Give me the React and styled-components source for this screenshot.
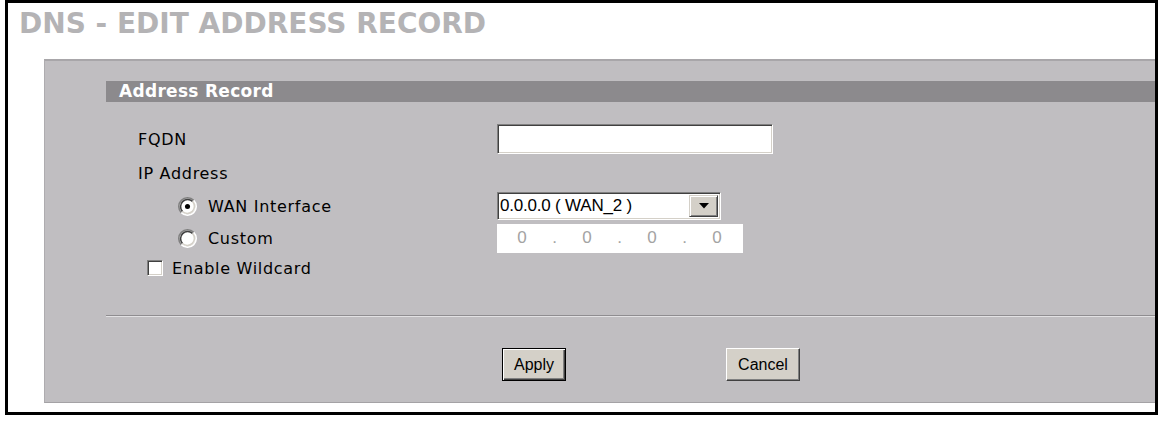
import styled, { createGlobalStyle } from "styled-components";

const GlobalStyle = createGlobalStyle`
  html, body {
    margin: 0;
    padding: 0;
    background: #ffffff;
  }
`;

const Frame = styled.div`
  box-sizing: border-box;
  margin-left: 5px;
  width: 1153px;
  height: 415px;
  border: 3px solid #000000;
  background: #ffffff;
  overflow: hidden;
`;

const Title = styled.h1`
  box-sizing: border-box;
  margin: 0;
  height: 37px;
  padding: 5px 0 0 11px;
  font-family: "DejaVu Sans", Verdana, sans-serif;
  font-weight: bold;
  font-size: 28px;
  line-height: 32px;
  color: #b4b3b5;
  white-space: nowrap;
`;

const Panel = styled.div`
  box-sizing: border-box;
  margin: 19px 0 0 36px;
  width: 1200px;
  padding: 20px 0 21px 61px;
  background: #c0bec1;
  border-top: 2px solid #a8a6a9;
  border-left: 1px solid #aeacaf;
  border-bottom: 1px solid #a4a2a5;
`;

const SectionBar = styled.div`
  height: 21px;
  padding-left: 13px;
  background: #8c8a8d;
  font-family: "DejaVu Sans", Verdana, sans-serif;
  font-weight: bold;
  font-size: 17px;
  letter-spacing: 0.3px;
  line-height: 21px;
  color: #ffffff;
`;

const Form = styled.div`
  margin-top: 20px;
  padding-left: 32px;
  display: flex;
  flex-direction: column;
`;

const Row = styled.div`
  display: grid;
  grid-template-columns: 359px 1fr;
  align-items: center;
  height: ${(p) => p.$h}px;
`;

const Label = styled.div`
  display: flex;
  align-items: center;
  padding-left: ${(p) => p.$indent || 0}px;
  font-family: "DejaVu Sans", Verdana, sans-serif;
  font-size: 16px;
  letter-spacing: 0.7px;
  color: #000000;
  white-space: nowrap;
`;

const OptionText = styled.span`
  margin-left: ${(p) => p.$gap}px;
`;

const TextBox = styled.div`
  box-sizing: border-box;
  width: 276px;
  height: 30px;
  background: #ffffff;
  border-top: 1px solid #808080;
  border-left: 1px solid #808080;
  border-bottom: 1px solid #ffffff;
  border-right: 1px solid #ffffff;
  box-shadow: inset 1px 1px #404040, inset -1px -1px #d4d0c8;
`;

const Select = styled.div`
  box-sizing: border-box;
  width: 224px;
  height: 28px;
  display: flex;
  align-items: center;
  justify-content: space-between;
  padding: 2px;
  background: #ffffff;
  border-top: 1px solid #808080;
  border-left: 1px solid #808080;
  border-bottom: 1px solid #ffffff;
  border-right: 1px solid #ffffff;
  box-shadow: inset 1px 1px #404040, inset -1px -1px #d4d0c8;
  font-family: "Liberation Sans", Arial, sans-serif;
  font-size: 17px;
  letter-spacing: -0.2px;
  color: #000000;
`;

const SelectValue = styled.span`
  white-space: pre;
`;

const DropButton = styled.div`
  box-sizing: border-box;
  width: 29px;
  height: 22px;
  display: flex;
  align-items: center;
  justify-content: center;
  background: #d4d0c8;
  border-top: 1px solid #d4d0c8;
  border-left: 1px solid #d4d0c8;
  border-bottom: 1px solid #404040;
  border-right: 1px solid #404040;
  box-shadow: inset 1px 1px #ffffff, inset -1px -1px #808080;
`;

const IpBox = styled.div`
  box-sizing: border-box;
  width: 246px;
  height: 29px;
  display: flex;
  align-items: center;
  background: #ffffff;
  font-family: "Liberation Sans", Arial, sans-serif;
  font-size: 17px;
  color: #a3a3a3;
`;

const IpCell = styled.span`
  width: ${(p) => (p.$dot ? 15 : 50)}px;
  text-align: center;
`;

const CheckBox = styled.span`
  box-sizing: border-box;
  display: inline-block;
  width: 16px;
  height: 16px;
  background: #ffffff;
  border-top: 1px solid #808080;
  border-left: 1px solid #808080;
  border-bottom: 1px solid #ffffff;
  border-right: 1px solid #ffffff;
  box-shadow: inset 1px 1px #404040, inset -1px -1px #d4d0c8;
`;

const Divider = styled.div`
  margin-top: 33px;
  height: 1px;
  background: #8f8d90;
  border-bottom: 1px solid #e2e1e3;
`;

const Buttons = styled.div`
  margin-top: 31px;
  padding-left: 396px;
  display: flex;
  gap: 160px;
`;

const Button = styled.button`
  box-sizing: border-box;
  width: ${(p) => p.$w}px;
  height: 33px;
  padding: 0;
  background: #d4d0c8;
  font-family: "Liberation Sans", Arial, sans-serif;
  font-size: 16px;
  color: #000000;
  cursor: pointer;
  border-top: 1px solid ${(p) => (p.$default ? "#000000" : "#ffffff")};
  border-left: 1px solid ${(p) => (p.$default ? "#000000" : "#ffffff")};
  border-bottom: 1px solid ${(p) => (p.$default ? "#000000" : "#404040")};
  border-right: 1px solid ${(p) => (p.$default ? "#000000" : "#404040")};
  box-shadow: ${(p) =>
    p.$default
      ? "inset 1px 1px #ffffff, inset -1px -1px #404040, inset -2px -2px #808080"
      : "inset -1px -1px #808080"};
`;

const Radio = ({ checked }) => (
  <svg width="19" height="19" viewBox="0 0 12 12">
    <circle cx="6" cy="6" r="5" fill="#ffffff" />
    <path d="M2.11 9.89 A5.5 5.5 0 0 1 9.89 2.11" fill="none" stroke="#808080" strokeWidth="1" />
    <path d="M9.89 2.11 A5.5 5.5 0 0 1 2.11 9.89" fill="none" stroke="#ffffff" strokeWidth="1" />
    <path d="M2.82 9.18 A4.5 4.5 0 0 1 9.18 2.82" fill="none" stroke="#404040" strokeWidth="1" />
    <path d="M9.18 2.82 A4.5 4.5 0 0 1 2.82 9.18" fill="none" stroke="#d4d0c8" strokeWidth="1" />
    {checked && <circle cx="6" cy="6" r="1.6" fill="#000000" />}
  </svg>
);

const ArrowDown = () => (
  <svg width="10" height="6" viewBox="0 0 10 6">
    <path d="M0 0 H10 L5 5.5 Z" fill="#000000" />
  </svg>
);

const App = () => {
  return (
    <>
      <GlobalStyle />
      <Frame>
        <Title>DNS - EDIT ADDRESS RECORD</Title>
        <Panel>
          <SectionBar>Address Record</SectionBar>
          <Form>
            <Row $h={34}>
              <Label>FQDN</Label>
              <TextBox />
            </Row>
            <Row $h={34}>
              <Label>IP Address</Label>
            </Row>
            <Row $h={32}>
              <Label $indent={40}>
                <Radio checked />
                <OptionText $gap={11}>WAN Interface</OptionText>
              </Label>
              <Select>
                <SelectValue>0.0.0.0 ( WAN_2 )</SelectValue>
                <DropButton>
                  <ArrowDown />
                </DropButton>
              </Select>
            </Row>
            <Row $h={32}>
              <Label $indent={40}>
                <Radio />
                <OptionText $gap={11}>Custom</OptionText>
              </Label>
              <IpBox>
                <IpCell>0</IpCell>
                <IpCell $dot>.</IpCell>
                <IpCell>0</IpCell>
                <IpCell $dot>.</IpCell>
                <IpCell>0</IpCell>
                <IpCell $dot>.</IpCell>
                <IpCell>0</IpCell>
              </IpBox>
            </Row>
            <Row $h={28}>
              <Label $indent={9}>
                <CheckBox />
                <OptionText $gap={9}>Enable Wildcard</OptionText>
              </Label>
            </Row>
          </Form>
          <Divider />
          <Buttons>
            <Button $w={64} $default>
              Apply
            </Button>
            <Button $w={74}>Cancel</Button>
          </Buttons>
        </Panel>
      </Frame>
    </>
  );
};

export default App;
